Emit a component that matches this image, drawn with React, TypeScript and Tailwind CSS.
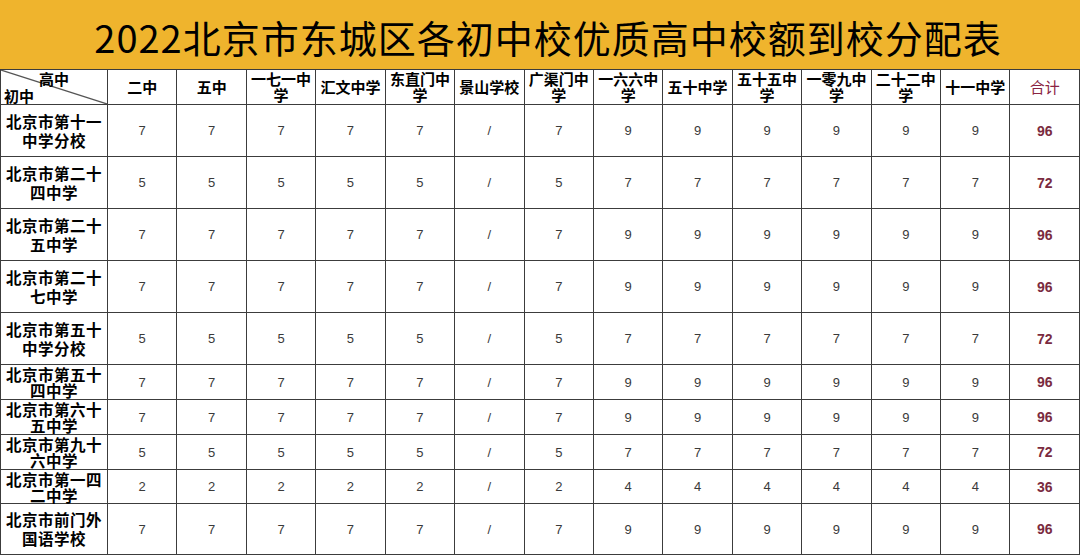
const schools = [
  "二中",
  "五中",
  "一七一中学",
  "汇文中学",
  "东直门中学",
  "景山学校",
  "广渠门中学",
  "一六六中学",
  "五十中学",
  "五十五中学",
  "一零九中学",
  "二十二中学",
  "十一中学",
];

const rows = [
  { name: "北京市第十一中学分校", a: 7, b: 9, total: 96, h: "h-[52px]", lh: "leading-[19px]" },
  { name: "北京市第二十四中学", a: 5, b: 7, total: 72, h: "h-[52px]", lh: "leading-[19px]" },
  { name: "北京市第二十五中学", a: 7, b: 9, total: 96, h: "h-[52px]", lh: "leading-[19px]" },
  { name: "北京市第二十七中学", a: 7, b: 9, total: 96, h: "h-[52px]", lh: "leading-[19px]" },
  { name: "北京市第五十中学分校", a: 5, b: 7, total: 72, h: "h-[52px]", lh: "leading-[19px]" },
  { name: "北京市第五十四中学", a: 7, b: 9, total: 96, h: "h-[35px]", lh: "leading-[16px]" },
  { name: "北京市第六十五中学", a: 7, b: 9, total: 96, h: "h-[35px]", lh: "leading-[16px]" },
  { name: "北京市第九十六中学", a: 5, b: 7, total: 72, h: "h-[35px]", lh: "leading-[16px]" },
  { name: "北京市第一四二中学", a: 2, b: 4, total: 36, h: "h-[34px]", lh: "leading-[16px]" },
  { name: "北京市前门外国语学校", a: 7, b: 9, total: 96, h: "h-[51px]", lh: "leading-[19px]" },
];

const cjk = "font-['Noto_Sans_CJK_SC',sans-serif]";
const cell = "border border-[#3c3c3c] p-0 text-center align-middle";

export default function App() {
  return (
    <div className={`w-[1080px] h-[557px] bg-white overflow-hidden ${cjk}`}>
      {/* Title */}
      <div className="h-[69px] bg-[#EFB42D] flex items-center justify-center pl-[16px]">
        <h1 className="text-[38px] font-normal text-black tracking-[1px] leading-none pt-[4px]">
          2022北京市东城区各初中校优质高中校额到校分配表
        </h1>
      </div>

      {/* Table */}
      <table className="table-fixed border-collapse w-[1080px]">
        <colgroup>
          <col className="w-[107px]" />
          {schools.map((s) => (
            <col key={s} />
          ))}
          <col />
        </colgroup>
        <thead>
          <tr className="h-[35px]">
            <th className={`${cell} relative`}>
              <svg
                className="absolute inset-0 w-full h-full"
                viewBox="0 0 100 100"
                preserveAspectRatio="none"
              >
                <line x1="0" y1="0" x2="100" y2="100" stroke="#555" strokeWidth="1.2" vectorEffect="non-scaling-stroke" />
              </svg>
              <span className="absolute left-[38px] top-[1px] text-[15px] font-bold leading-none">
                高中
              </span>
              <span className="absolute left-[3px] bottom-[1px] text-[15px] font-bold leading-none">
                初中
              </span>
            </th>
            {schools.map((s) => (
              <th
                key={s}
                className={`${cell} text-[15px] font-bold leading-[16px] px-[2px] text-black`}
              >
                {s}
              </th>
            ))}
            <th className={`${cell} text-[15px] font-normal text-[#8A2442]`}>合计</th>
          </tr>
        </thead>
        <tbody>
          {rows.map((r) => (
            <tr key={r.name} className={r.h}>
              <td className={`${cell} text-[15.5px] font-bold ${r.lh} px-[4px] text-black tracking-[0.5px]`}>
                {r.name}
              </td>
              {schools.map((s, i) => {
                const v = i === 5 ? "/" : i < 5 || i === 6 ? r.a : r.b;
                return (
                  <td
                    key={s}
                    className={`${cell} text-[13px] leading-none text-[#3a3a3a] font-['Liberation_Sans',sans-serif]`}
                  >
                    {v}
                  </td>
                );
              })}
              <td className={`${cell} text-[14px] leading-none font-semibold text-[#7A2B40] font-['Liberation_Sans',sans-serif]`}>
                {r.total}
              </td>
            </tr>
          ))}
        </tbody>
      </table>
    </div>
  );
}
